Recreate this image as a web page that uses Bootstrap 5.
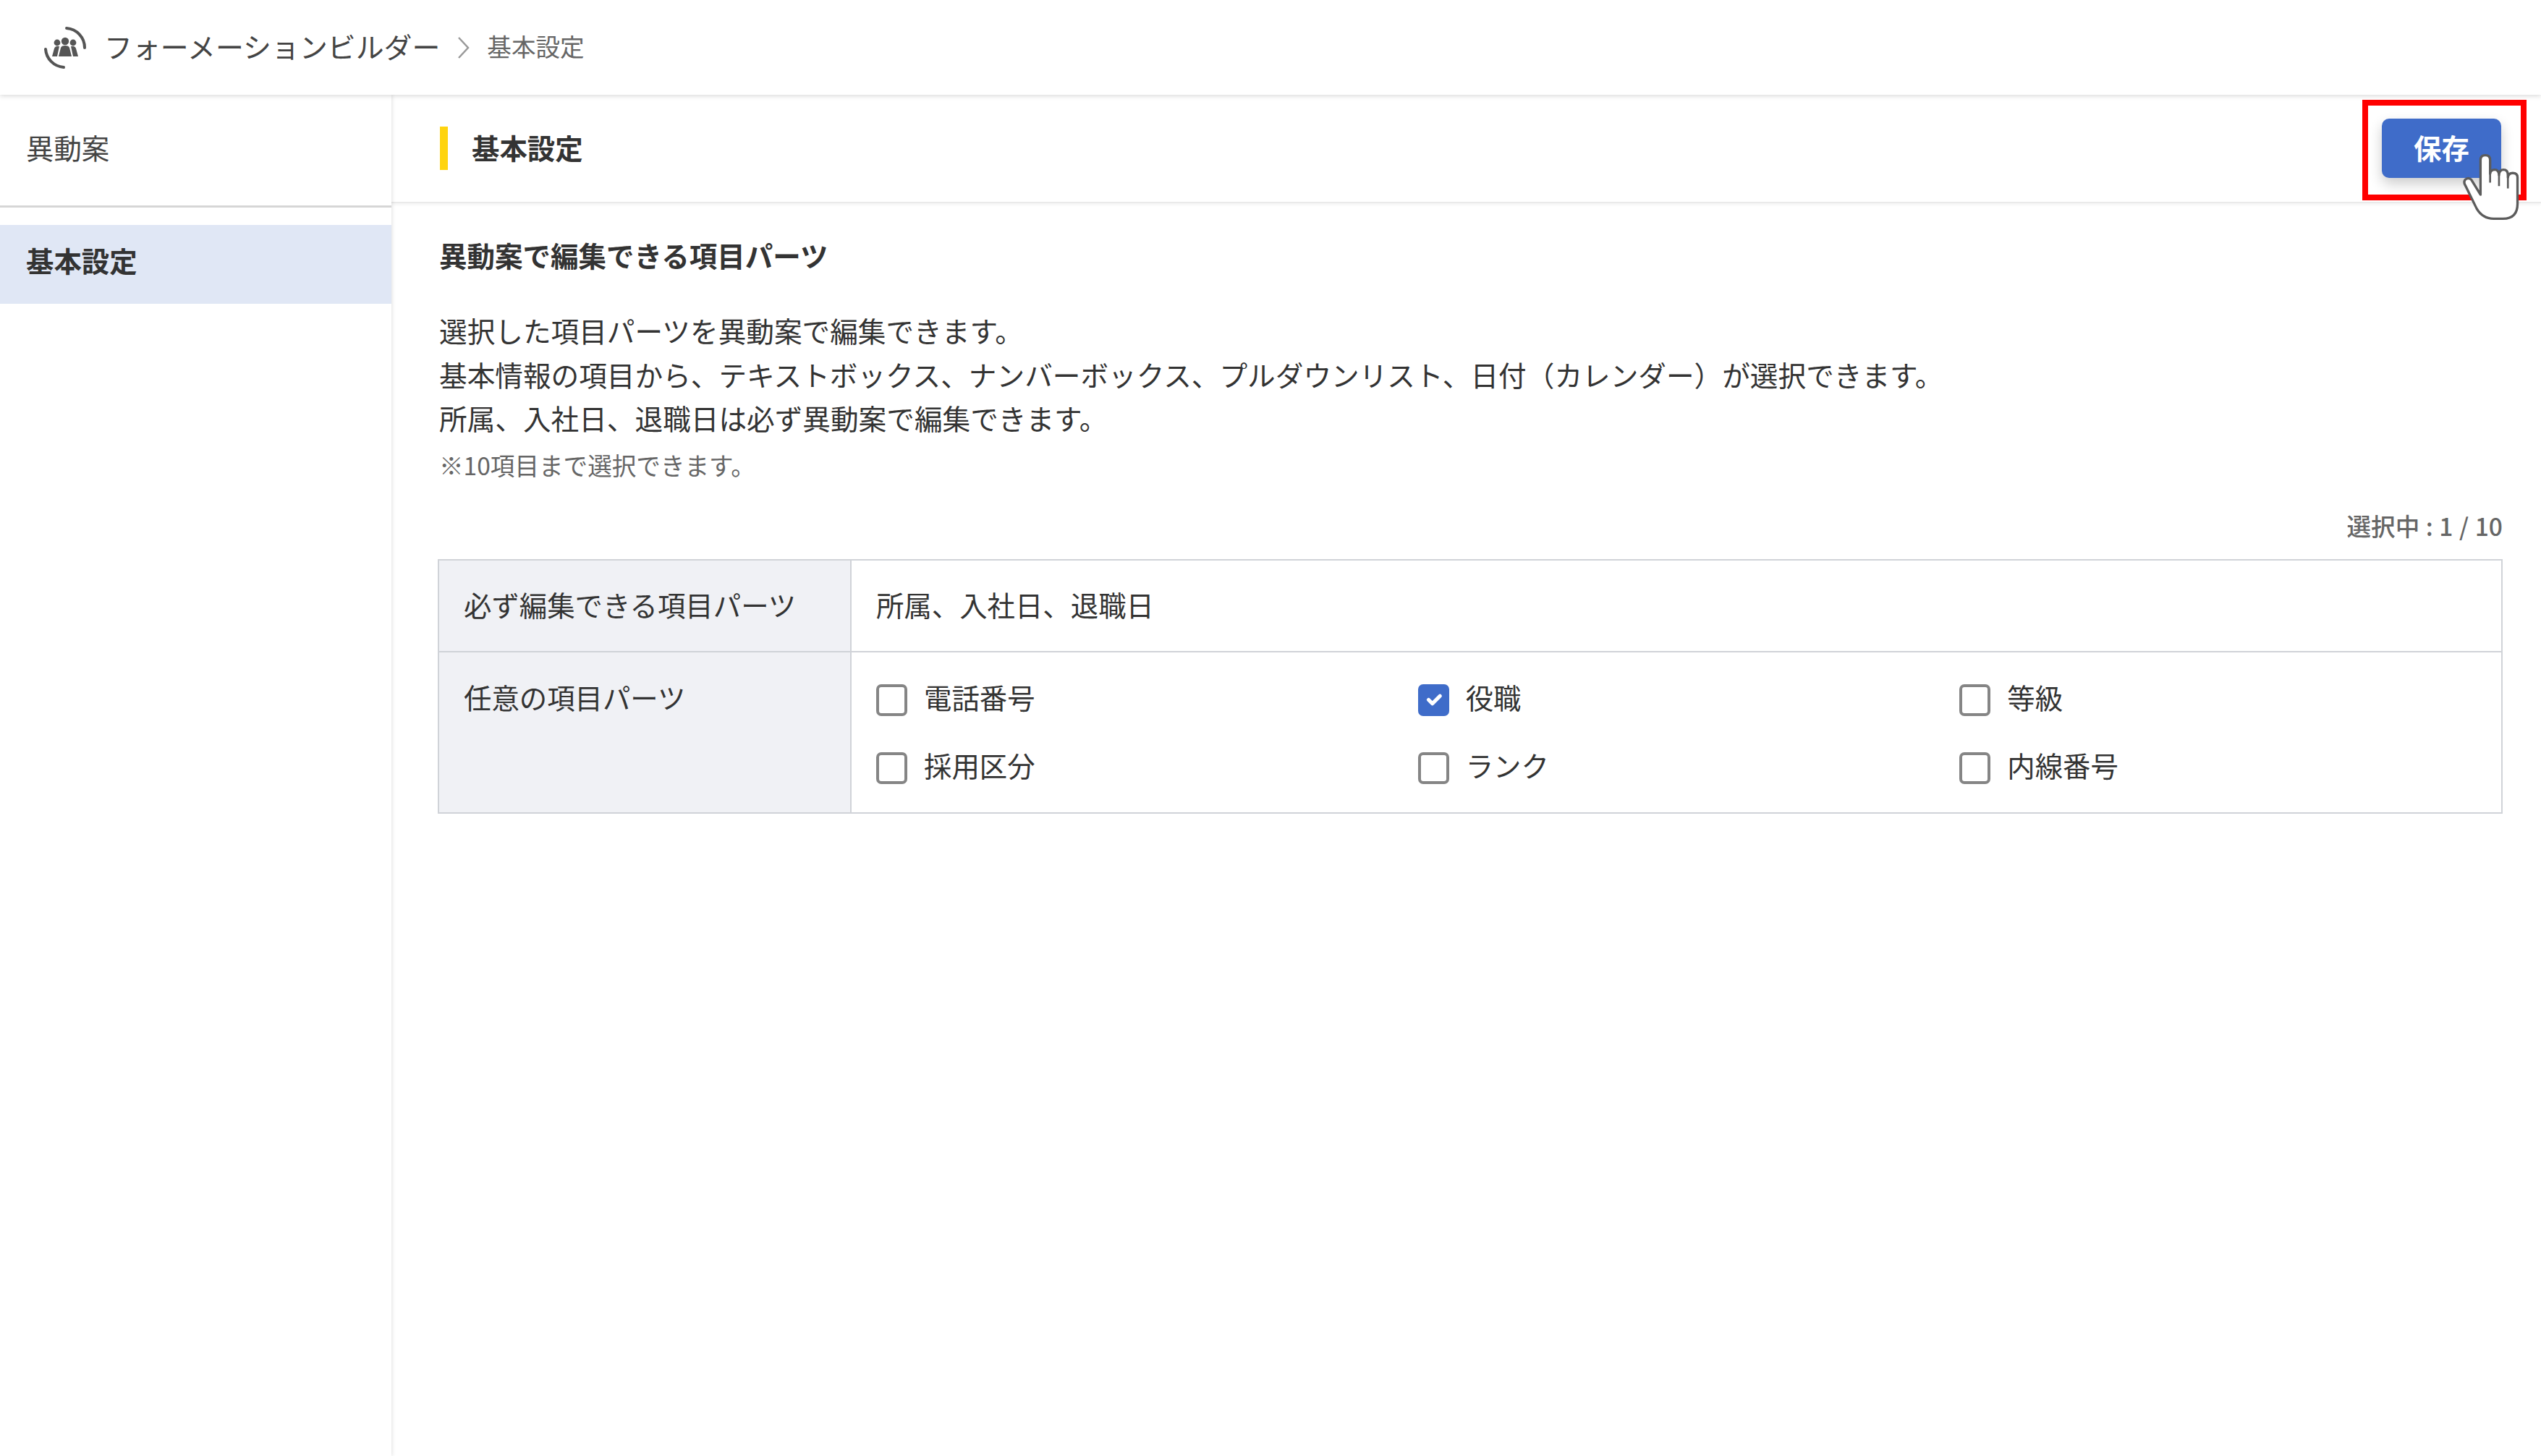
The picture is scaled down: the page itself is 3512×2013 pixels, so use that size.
<!DOCTYPE html>
<html lang="ja">
<head>
<meta charset="utf-8">
<title>基本設定</title>
<link href="https://cdn.jsdelivr.net/npm/bootstrap@5.3.0/dist/css/bootstrap.min.css" rel="stylesheet">
<style>
html,body{height:100%;}
body{font-family:"Noto Sans CJK JP","Liberation Sans",sans-serif;font-size:38.4px;color:#333;background:#fff;overflow:hidden;}
.top-head{height:131px;padding-left:55px;box-shadow:0 2px 6px rgba(0,0,0,.14);position:relative;z-index:3;background:#fff;}
.logo-ic{width:70px;height:70px;margin-right:19px;}
.crumb-main{color:#444;line-height:1;font-size:38.9px;padding-bottom:4px;}
.crumb-sep{width:20px;height:36px;margin:0 22px 0 23px;}
.crumb-sub{font-size:33.6px;color:#666;line-height:1;padding-bottom:4px;}
.body-wrap{height:calc(100% - 131px);}
.side-col{width:541px;flex:none;box-shadow:1px 0 5px rgba(0,0,0,.12);position:relative;z-index:2;background:#fff;}
.side-head{height:156px;padding-left:36px;padding-bottom:8px;border-bottom:3px solid #d6d6d6;color:#444;}
.side-item{margin-top:24px;height:109px;padding-left:36px;padding-bottom:12px;background:#e0e7f5;font-weight:700;}
.main-col{min-width:0;}
.main-head{height:150px;padding:0 55px 0 67px;border-bottom:2px solid #eaeaea;box-shadow:0 2px 4px rgba(0,0,0,.05);}
.title-bar{border-left:11px solid #ffd40f;height:60px;padding-left:33px;padding-bottom:3px;font-weight:700;}
.save-btn{width:165px;height:82px;padding:0 0 3px;font-size:38.4px;font-weight:700;color:#fff;background:#3f6cc9;border:0;border-radius:10px;box-shadow:0 8px 18px rgba(0,0,0,.2);}
.save-wrap{position:relative;}
.red-box{position:absolute;left:-27px;top:-26px;width:227px;height:139px;border:8px solid #f00;pointer-events:none;}
.hand-ic{position:absolute;left:111px;top:48px;width:80px;height:93px;}
.main-body{padding:44px 53px 0 64px;}
.sec-title{font-weight:700;font-size:38.5px;line-height:54px;margin-bottom:47px;padding-left:2px;}
.desc-txt{line-height:60.6px;margin:0;font-size:38.65px;padding-left:2px;}
.note-txt{font-size:33.6px;color:#666;line-height:50px;margin-top:10px;padding-left:2px;}
.count-txt{font-size:33.6px;color:#666;font-weight:500;line-height:50px;margin-top:34px;margin-bottom:21px;word-spacing:1px;}
.form-tbl{table-layout:fixed;margin:0;border-color:#d0d3d8;--bs-border-width:2px;color:#333;font-size:38.4px;}
.form-tbl th{width:570px;background:#f0f1f5;font-weight:400;padding:34px;line-height:58px;--bs-table-bg:#f0f1f5;color:#333;}
.form-tbl td{padding:34px 0 0 34px;line-height:58px;}
.row-one th,.row-one td{height:127px;padding-top:31px;padding-bottom:0;}
.row-two td{height:223px;padding-top:32px;padding-bottom:0;}
.row-two th{padding-top:32px;}
.opt-check{display:flex;align-items:center;min-height:0;padding:0;margin:0 0 36px;height:58px;}
.opt-check .form-check-input{width:43px;height:44px;margin:10px 23px 0 0;float:none;flex:none;border:4px solid #858585;border-radius:7px;}
.opt-check .form-check-input:checked{background-color:#3f6cc9;border-color:#3f6cc9;}
.opt-check .form-check-label{line-height:58px;}
</style>
</head>
<body>
<header class="top-head d-flex align-items-center">
  <svg class="logo-ic" viewBox="0 0 70 70" aria-hidden="true">
    <g fill="none" stroke="#555" stroke-width="4" stroke-linecap="round">
      <path d="M37 8A27 27 0 0 1 62 35"/>
      <path d="M8 37A27 27 0 0 0 33 62"/>
    </g>
    <g fill="#555">
      <circle cx="24" cy="28" r="4.4"/><circle cx="46" cy="28" r="4.4"/><circle cx="35" cy="26" r="5.2"/>
      <path d="M17 47l3-11q1-3 4-3h3l-3 14z"/>
      <path d="M53 47l-3-11q-1-3-4-3h-3l3 14z"/>
      <path d="M26 47l3-12q1-3 6-3t6 3l3 12z"/>
    </g>
  </svg>
  <span class="crumb-main">フォーメーションビルダー</span>
  <svg class="crumb-sep" viewBox="0 0 20 36" aria-hidden="true"><path d="M3 4l13 14L3 32" fill="none" stroke="#999" stroke-width="2.5"/></svg>
  <span class="crumb-sub">基本設定</span>
</header>
<div class="body-wrap d-flex">
  <aside class="side-col">
    <div class="side-head d-flex align-items-center">異動案</div>
    <div class="side-item d-flex align-items-center">基本設定</div>
  </aside>
  <main class="main-col flex-grow-1">
    <div class="main-head d-flex align-items-center justify-content-between">
      <div class="title-bar d-flex align-items-center">基本設定</div>
      <div class="save-wrap">
        <button type="button" class="btn save-btn">保存</button>
        <div class="red-box"></div>
        <svg class="hand-ic" viewBox="760 340 240 280" aria-hidden="true">
          <path d="M836 512L798 450Q785 438 772 450Q765 460 772 472L820 570Q845 612 890 612H930Q990 612 990 550V440Q990 422 970 422Q952 422 950 440V430Q950 408 932 408Q914 408 913 430Q912 408 895 408Q878 408 876 425V368Q876 348 856 348Q836 348 836 368Z" fill="#fff" stroke="#5c5c5c" stroke-width="10" stroke-linejoin="round"/>
          <path d="M836 512V440M876 420V462M913 430V476M950 440V486" fill="none" stroke="#5c5c5c" stroke-width="8"/>
        </svg>
      </div>
    </div>
    <div class="main-body">
      <div class="sec-title">異動案で編集できる項目パーツ</div>
      <p class="desc-txt">選択した項目パーツを異動案で編集できます。<br>基本情報の項目から、テキストボックス、ナンバーボックス、プルダウンリスト、日付（カレンダー）が選択できます。<br>所属、入社日、退職日は必ず異動案で編集できます。</p>
      <div class="note-txt">※10項目まで選択できます。</div>
      <div class="count-txt text-end">選択中 : 1 / 10</div>
      <table class="table table-bordered form-tbl">
        <tbody>
          <tr class="row-one">
            <th scope="row">必ず編集できる項目パーツ</th>
            <td>所属、入社日、退職日</td>
          </tr>
          <tr class="row-two">
            <th scope="row">任意の項目パーツ</th>
            <td>
              <div class="row g-0">
                <div class="col-4"><div class="form-check opt-check"><input class="form-check-input" type="checkbox" id="c1"><label class="form-check-label" for="c1">電話番号</label></div></div>
                <div class="col-4"><div class="form-check opt-check"><input class="form-check-input" type="checkbox" id="c2" checked><label class="form-check-label" for="c2">役職</label></div></div>
                <div class="col-4"><div class="form-check opt-check"><input class="form-check-input" type="checkbox" id="c3"><label class="form-check-label" for="c3">等級</label></div></div>
                <div class="col-4"><div class="form-check opt-check"><input class="form-check-input" type="checkbox" id="c4"><label class="form-check-label" for="c4">採用区分</label></div></div>
                <div class="col-4"><div class="form-check opt-check"><input class="form-check-input" type="checkbox" id="c5"><label class="form-check-label" for="c5">ランク</label></div></div>
                <div class="col-4"><div class="form-check opt-check"><input class="form-check-input" type="checkbox" id="c6"><label class="form-check-label" for="c6">内線番号</label></div></div>
              </div>
            </td>
          </tr>
        </tbody>
      </table>
    </div>
  </main>
</div>
<script src="https://cdn.jsdelivr.net/npm/bootstrap@5.3.0/dist/js/bootstrap.bundle.min.js"></script>
</body>
</html>
